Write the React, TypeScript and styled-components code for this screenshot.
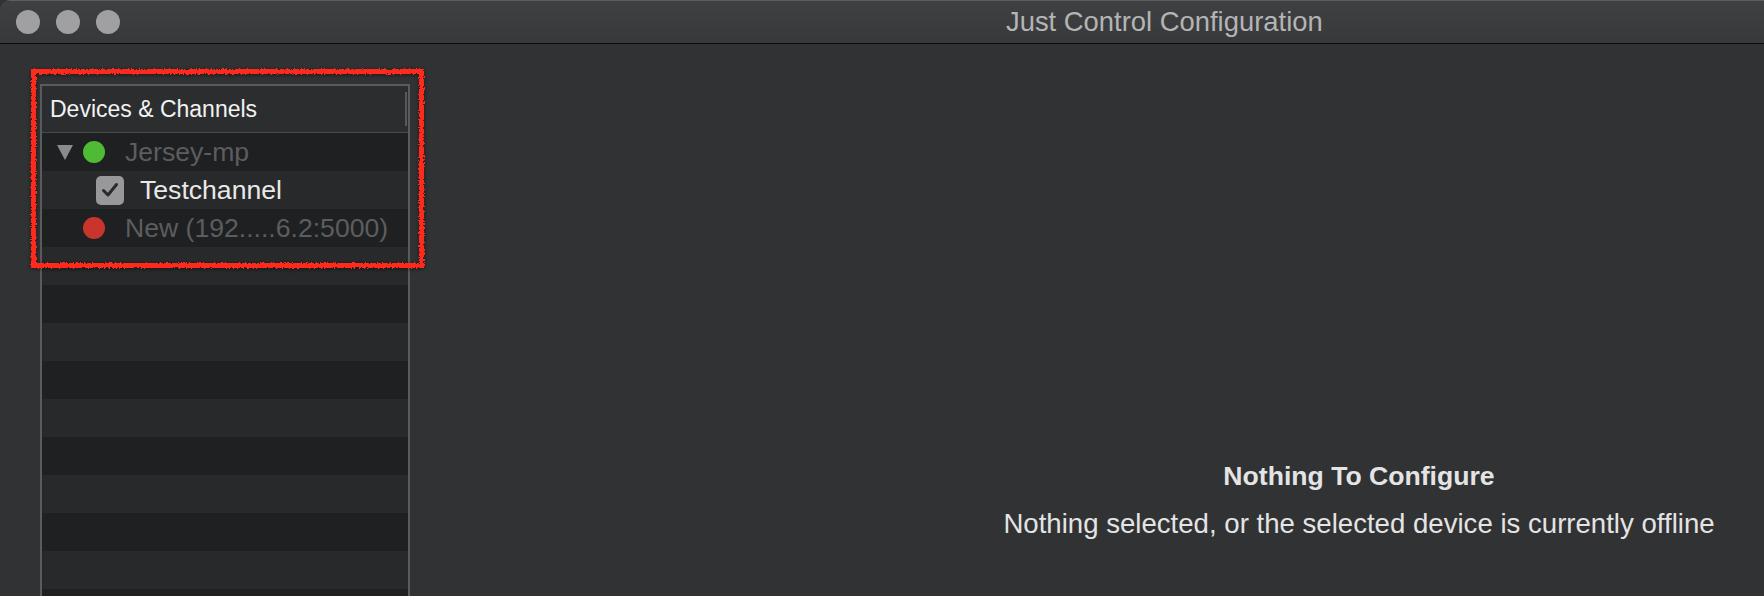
import React from "react";
import styled, { createGlobalStyle } from "styled-components";

const GlobalStyle = createGlobalStyle`
  html, body {
    margin: 0;
    padding: 0;
    background: #313234;
    overflow: hidden;
  }
  body {
    font-family: "Liberation Sans", Arial, sans-serif;
  }
`;

const Window = styled.div`
  width: 100%;
  height: 596px;
  display: flex;
  flex-direction: column;
  background: #313234;
  border-top-left-radius: 10px;
  overflow: hidden;
`;

const TitleBar = styled.div`
  height: 42px;
  flex-shrink: 0;
  display: flex;
  align-items: center;
  padding-left: 16px;
  background: linear-gradient(#3f4042, #38393b);
  border-top: 1px solid #5c5d5f;
  border-bottom: 1px solid #0b0b0c;
`;

const Lights = styled.div`
  display: flex;
  gap: 16px;
`;

const Light = styled.span`
  width: 24px;
  height: 24px;
  border-radius: 50%;
  background: #a0a0a2;
`;

const Title = styled.div`
  margin-left: 886px;
  font-size: 27.4px;
  color: #b4b4b5;
  white-space: nowrap;
`;

const Body = styled.div`
  position: relative;
  flex: 1;
  display: flex;
  padding: 40px 0 0 40px;
`;

const Panel = styled.div`
  width: 366px;
  flex-shrink: 0;
  display: flex;
  flex-direction: column;
  border: 2px solid #5a5b5d;
  border-bottom: none;
  background: #2d2e30;
`;

const Header = styled.div`
  height: 46px;
  display: flex;
  align-items: center;
  justify-content: space-between;
  padding-left: 8px;
  border-bottom: 1px solid #48494b;
  background: #2c2d2f;
`;

const HeaderText = styled.span`
  font-size: 23px;
  color: #f2f2f2;
`;

const Divider = styled.span`
  width: 2px;
  height: 34px;
  margin-right: 1px;
  background: #58595b;
`;

const Rows = styled.div`
  flex: 1;
  display: flex;
  flex-direction: column;
  overflow: hidden;
`;

const Row = styled.div<{ $odd: boolean; $indent: number }>`
  height: 38px;
  flex-shrink: 0;
  display: flex;
  align-items: center;
  padding-left: ${(p) => p.$indent}px;
  background: ${(p) => (p.$odd ? "#1f2022" : "#28292b")};
`;

const Triangle = styled.span`
  width: 0;
  height: 0;
  border-left: 8px solid transparent;
  border-right: 8px solid transparent;
  border-top: 15px solid #8b8b8d;
  margin-right: 10px;
  margin-top: 1px;
`;

const Dot = styled.span<{ $color: string }>`
  width: 22px;
  height: 22px;
  border-radius: 50%;
  background: ${(p) => p.$color};
  margin-right: 20px;
`;

const Check = styled.span`
  width: 28px;
  height: 29px;
  border-radius: 5px;
  background: #98989a;
  display: flex;
  align-items: center;
  justify-content: center;
  margin-right: 16px;
`;

const Label = styled.span<{ $dim?: boolean }>`
  font-size: 26.6px;
  color: ${(p) => (p.$dim ? "#5c5d5f" : "#e8e8e8")};
  white-space: nowrap;
`;

const Main = styled.div`
  flex: 1;
  display: flex;
  flex-direction: column;
  align-items: center;
  padding-top: 376px;
  padding-left: 544px;
  gap: 16px;
`;

const Heading = styled.div`
  font-size: 26.6px;
  line-height: 32px;
  font-weight: bold;
  color: #e4e4e5;
`;

const Sub = styled.div`
  font-size: 27.6px;
  line-height: 32px;
  color: #e4e4e5;
  white-space: nowrap;
`;

const Annotation = styled.div`
  position: absolute;
  left: 31px;
  top: 25px;
  width: 383px;
  height: 189px;
  border: 5px solid #ff2a1c;
  filter: url(#rough) drop-shadow(0 1px 2px rgba(0, 0, 0, 0.5));
  pointer-events: none;
`;

const Defs = styled.svg`
  position: absolute;
  width: 0;
  height: 0;
`;

const stripes = Array.from({ length: 14 }, (_, i) => i);

export default function App() {
  return (
    <>
      <GlobalStyle />
      <Defs>
        <filter id="rough">
          <feTurbulence type="fractalNoise" baseFrequency="0.6" numOctaves="2" seed="3" />
          <feDisplacementMap in="SourceGraphic" scale="4" />
        </filter>
      </Defs>
      <Window>
        <TitleBar>
          <Lights>
            <Light />
            <Light />
            <Light />
          </Lights>
          <Title>Just Control Configuration</Title>
        </TitleBar>
        <Body>
          <Panel>
            <Header>
              <HeaderText>Devices &amp; Channels</HeaderText>
              <Divider />
            </Header>
            <Rows>
              <Row $odd $indent={15}>
                <Triangle />
                <Dot $color="#4fbb35" />
                <Label $dim>Jersey-mp</Label>
              </Row>
              <Row $odd={false} $indent={54}>
                <Check>
                  <svg width="18" height="16" viewBox="0 0 18 16">
                    <path d="M2.5 8.5 L7 13 L15.5 2.5" fill="none" stroke="#2a2a2b" strokeWidth="3" strokeLinecap="round" strokeLinejoin="round" />
                  </svg>
                </Check>
                <Label>Testchannel</Label>
              </Row>
              <Row $odd $indent={41}>
                <Dot $color="#c9352c" />
                <Label $dim>New (192.....6.2:5000)</Label>
              </Row>
              {stripes.map((i) => (
                <Row key={i} $odd={i % 2 === 1} $indent={0} />
              ))}
            </Rows>
          </Panel>
          <Main>
            <Heading>Nothing To Configure</Heading>
            <Sub>Nothing selected, or the selected device is currently offline</Sub>
          </Main>
          <Annotation />
        </Body>
      </Window>
    </>
  );
}
